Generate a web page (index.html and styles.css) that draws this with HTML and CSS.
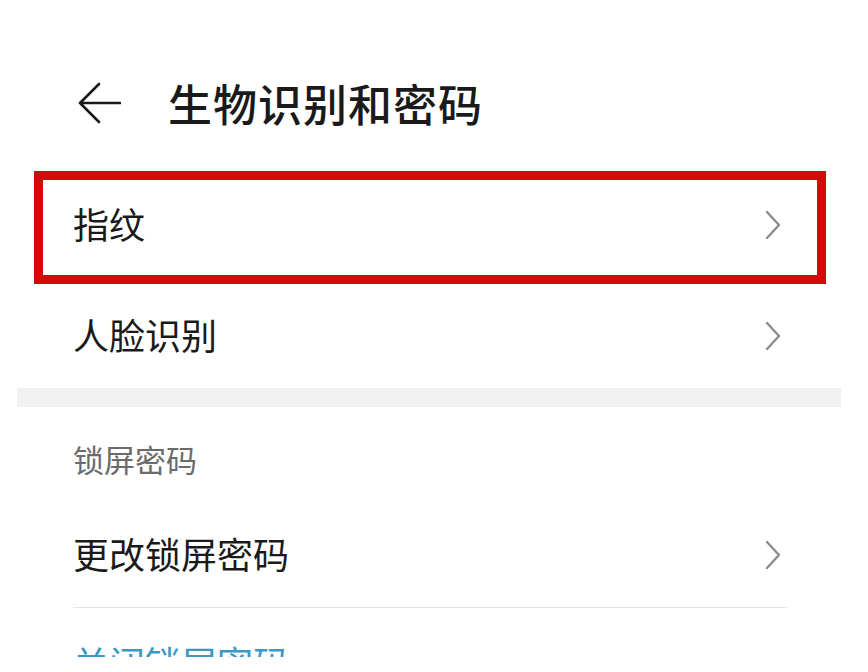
FILE: index.html
```html
<!DOCTYPE html>
<html lang="zh-CN">

<head>
    <meta charset="UTF-8">
    <meta name="viewport" content="width=device-width, initial-scale=1.0">
    <title>生物识别和密码</title>
    <link rel="stylesheet" href="styles.css">
</head>

<body>
    <div class="page">
        <header class="top-bar">
            <svg class="back" width="44" height="42" viewBox="0 0 44 42">
                <path d="M22 2 L3 21 L22 40 M3 21 L43 21" fill="none" stroke="#1a1a1a" stroke-width="2.6" stroke-linecap="round" stroke-linejoin="round" />
            </svg>
            <h1>生物识别和密码</h1>
        </header>

        <div class="item item-first">
            <span class="label">指纹</span>
            <svg class="chevron" width="16" height="30" viewBox="0 0 16 30">
                <path d="M2 2 L14 15 L2 28" fill="none" stroke="#8c8c8c" stroke-width="2.4" stroke-linecap="round" stroke-linejoin="round" />
            </svg>
            <div class="highlight"></div>
        </div>

        <div class="item item-second">
            <span class="label">人脸识别</span>
            <svg class="chevron" width="16" height="30" viewBox="0 0 16 30">
                <path d="M2 2 L14 15 L2 28" fill="none" stroke="#8c8c8c" stroke-width="2.4" stroke-linecap="round" stroke-linejoin="round" />
            </svg>
        </div>

        <div class="band"></div>

        <div class="section-title">锁屏密码</div>

        <div class="item item-lock">
            <span class="label">更改锁屏密码</span>
            <svg class="chevron" width="16" height="30" viewBox="0 0 16 30">
                <path d="M2 2 L14 15 L2 28" fill="none" stroke="#8c8c8c" stroke-width="2.4" stroke-linecap="round" stroke-linejoin="round" />
            </svg>
        </div>

        <div class="divider"></div>

        <div class="item-cut">
            <span class="label link">关闭锁屏密码</span>
        </div>
    </div>
</body>

</html>
```

FILE: styles.css
```css
body {
    font-family: "Noto Sans CJK SC", "Noto Sans", sans-serif;
    margin: 0;
    padding: 0;
    background-color: #fff;
    color: #1a1a1a;
    overflow: hidden;
}

.page {
    width: 824px;
    margin-left: 17px;
    height: 672px;
    overflow: hidden;
}

.top-bar {
    display: flex;
    align-items: center;
    height: 50px;
    padding-top: 78px;
    padding-bottom: 43px;
    padding-left: 60px;
}

.back {
    display: block;
    margin-right: 47px;
}

.top-bar h1 {
    margin: 0;
    font-size: 44px;
    font-weight: 500;
    line-height: 50px;
    letter-spacing: 1px;
    color: #1a1a1a;
}

.item {
    position: relative;
    display: flex;
    align-items: center;
    justify-content: space-between;
    padding-left: 56px;
    padding-right: 60px;
}

.item-first {
    height: 108px;
    padding-bottom: 5px;
}

.item-second {
    height: 104px;
}

.item-lock {
    height: 104px;
}

.label {
    font-size: 36px;
    line-height: 36px;
    color: #1a1a1a;
}

.item .label {
    padding-bottom: 5px;
}

.chevron {
    display: block;
}

.highlight {
    position: absolute;
    top: 0;
    left: 17px;
    right: 15px;
    bottom: 0;
    border: 9px solid #d20a0a;
}

.band {
    height: 19px;
    background-color: #f1f1f1;
}

.section-title {
    padding-top: 34px;
    padding-bottom: 26px;
    padding-left: 56px;
    font-size: 31px;
    line-height: 36px;
    color: #6b6b6b;
}

.divider {
    height: 1px;
    margin-left: 56px;
    margin-right: 54px;
    background-color: #e3e3e3;
}

.item-cut {
    height: 49px;
    overflow: hidden;
    padding-left: 56px;
}

.item-cut .label {
    display: block;
    padding-top: 36px;
}

.link {
    color: #3a98c4;
}
```
